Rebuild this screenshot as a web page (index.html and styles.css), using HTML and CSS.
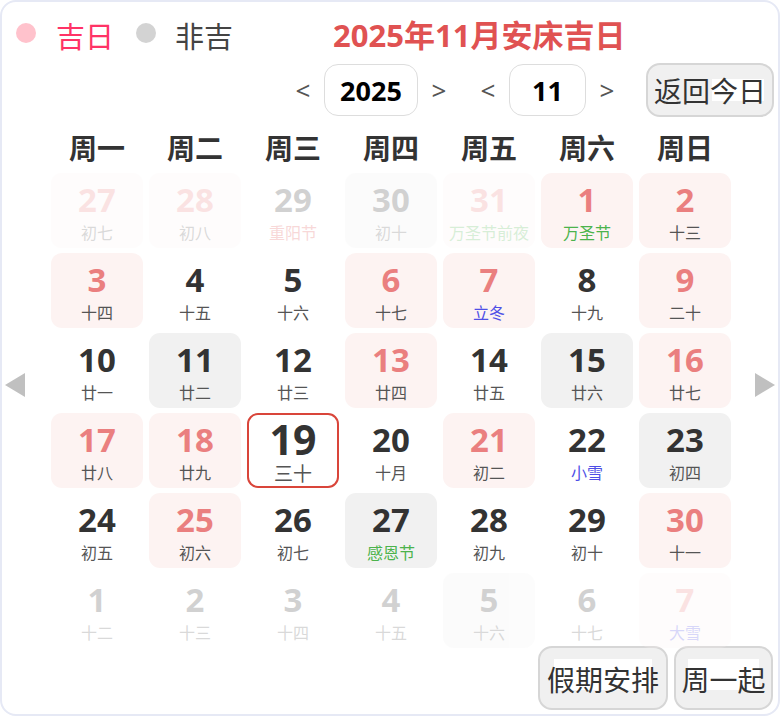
FILE: index.html
```html
<!DOCTYPE html>
<html lang="zh-CN">
<head>
<meta charset="utf-8">
<title>2025年11月安床吉日</title>
<link rel="stylesheet" href="styles.css">
</head>
<body>
<div class="app">
  <div class="top">
    <span class="dot dot-good"></span><span class="legend legend-good">吉日</span>
    <span class="dot dot-bad"></span><span class="legend legend-bad">非吉</span>
    <h1 class="title">2025年11月安床吉日</h1>
  </div>
  <div class="nav">
    <span class="arrow">&lt;</span>
    <span class="box box-year">2025</span>
    <span class="arrow">&gt;</span>
    <span class="arrow arrow-gap">&lt;</span>
    <span class="box box-month">11</span>
    <span class="arrow">&gt;</span>
    <button class="btn btn-today"><span class="hl-today">返回今日</span></button>
  </div>
  <div class="weekdays">
    <span>周一</span><span>周二</span><span>周三</span><span>周四</span><span>周五</span><span>周六</span><span>周日</span>
  </div>
  <div class="main">
    <div class="side side-left"><span class="tri tri-left"></span></div>
    <div class="grid">
      <div class="cell good faded"><span class="d">27</span><span class="l">初七</span></div>
      <div class="cell good faded"><span class="d">28</span><span class="l">初八</span></div>
      <div class="cell faded"><span class="d">29</span><span class="l fest-red">重阳节</span></div>
      <div class="cell bad faded"><span class="d">30</span><span class="l">初十</span></div>
      <div class="cell good faded"><span class="d">31</span><span class="l fest-green">万圣节前夜</span></div>
      <div class="cell good"><span class="d">1</span><span class="l fest-green">万圣节</span></div>
      <div class="cell good"><span class="d">2</span><span class="l">十三</span></div>

      <div class="cell good"><span class="d">3</span><span class="l">十四</span></div>
      <div class="cell"><span class="d">4</span><span class="l">十五</span></div>
      <div class="cell"><span class="d">5</span><span class="l">十六</span></div>
      <div class="cell good"><span class="d">6</span><span class="l">十七</span></div>
      <div class="cell good"><span class="d">7</span><span class="l term">立冬</span></div>
      <div class="cell"><span class="d">8</span><span class="l">十九</span></div>
      <div class="cell good"><span class="d">9</span><span class="l">二十</span></div>

      <div class="cell"><span class="d">10</span><span class="l">廿一</span></div>
      <div class="cell bad"><span class="d">11</span><span class="l">廿二</span></div>
      <div class="cell"><span class="d">12</span><span class="l">廿三</span></div>
      <div class="cell good"><span class="d">13</span><span class="l">廿四</span></div>
      <div class="cell"><span class="d">14</span><span class="l">廿五</span></div>
      <div class="cell bad"><span class="d">15</span><span class="l">廿六</span></div>
      <div class="cell good"><span class="d">16</span><span class="l">廿七</span></div>

      <div class="cell good"><span class="d">17</span><span class="l">廿八</span></div>
      <div class="cell good"><span class="d">18</span><span class="l">廿九</span></div>
      <div class="cell today"><span class="d">19</span><span class="l">三十</span></div>
      <div class="cell"><span class="d">20</span><span class="l">十月</span></div>
      <div class="cell good"><span class="d">21</span><span class="l">初二</span></div>
      <div class="cell"><span class="d">22</span><span class="l term">小雪</span></div>
      <div class="cell bad"><span class="d">23</span><span class="l">初四</span></div>

      <div class="cell"><span class="d">24</span><span class="l">初五</span></div>
      <div class="cell good"><span class="d">25</span><span class="l">初六</span></div>
      <div class="cell"><span class="d">26</span><span class="l">初七</span></div>
      <div class="cell bad"><span class="d">27</span><span class="l fest-green">感恩节</span></div>
      <div class="cell"><span class="d">28</span><span class="l">初九</span></div>
      <div class="cell"><span class="d">29</span><span class="l">初十</span></div>
      <div class="cell good"><span class="d">30</span><span class="l">十一</span></div>

      <div class="cell faded"><span class="d">1</span><span class="l">十二</span></div>
      <div class="cell faded"><span class="d">2</span><span class="l">十三</span></div>
      <div class="cell faded"><span class="d">3</span><span class="l">十四</span></div>
      <div class="cell faded"><span class="d">4</span><span class="l">十五</span></div>
      <div class="cell bad faded"><span class="d">5</span><span class="l">十六</span></div>
      <div class="cell faded"><span class="d">6</span><span class="l">十七</span></div>
      <div class="cell good faded"><span class="d">7</span><span class="l term">大雪</span></div>
    </div>
    <div class="side side-right"><span class="tri tri-right"></span></div>
  </div>
  <div class="bottom">
    <button class="btn btn-holiday"><span class="hl">假期安排</span></button>
    <button class="btn btn-week"><span class="hl">周一起</span></button>
  </div>
</div>
</body>
</html>
```

FILE: styles.css
```css
* { box-sizing: border-box; }
html, body { margin: 0; padding: 0; background: #fff; }
body {
  font-family: "Noto Sans", "Noto Sans CJK SC", sans-serif;
  color: #333;
}
.app {
  width: 780px;
  height: 716px;
  border: 2px solid #e6e9f5;
  border-radius: 16px;
  background: #fff;
  padding-top: 13px;
  overflow: hidden;
}
.top {
  display: flex;
  align-items: center;
  height: 40px;
  padding-left: 14px;
}
.dot {
  width: 20px;
  height: 20px;
  border-radius: 50%;
  flex: none;
  margin-top: -4px;
}
.dot-good { background: #ffc2cc; }
.dot-bad { background: #d3d3d3; margin-left: 22px; }
.legend {
  font-family: "Noto Sans CJK SC", sans-serif;
  font-size: 29px;
  line-height: 40px;
  margin-left: 20px;
}
.legend-good { color: #ff3366; }
.legend-bad { color: #444; margin-left: 19px; }
.title {
  margin: 0 0 0 100px;
  font-family: "Noto Sans", "Noto Sans CJK SC", sans-serif;
  font-size: 31px;
  font-weight: 700;
  line-height: 40px;
  color: #e05252;
}
.nav {
  display: flex;
  align-items: center;
  justify-content: flex-end;
  padding-right: 4px;
  margin-top: 8px;
  height: 54px;
}
.arrow {
  width: 28px;
  text-align: center;
  font-size: 26px;
  line-height: 30px;
  color: #555;
  margin-left: 7px;
}
.arrow-gap { margin-left: 21px; }
.box {
  height: 52px;
  border: 1.5px solid #dddddd;
  border-radius: 14px;
  display: flex;
  align-items: center;
  justify-content: center;
  font-size: 27px;
  font-weight: 700;
  color: #000;
  margin-left: 7px;
}
.box-year { width: 94px; }
.box-month { width: 77px; }
.btn {
  font-family: "Noto Sans CJK SC", sans-serif;
  font-size: 28px;
  color: #333;
  background: #f0f0f0;
  border: 2px solid #d6d6d6;
  border-radius: 14px;
  padding: 0;
  display: flex;
  align-items: center;
  justify-content: center;
}
.btn-today {
  width: 128px;
  height: 54px;
  margin-left: 25px;
}
.hl-today {
  line-height: 36px;
  background: linear-gradient(#fff, #fff) no-repeat right 2px center / 52px 22px;
}
.weekdays {
  display: grid;
  grid-template-columns: repeat(7, 92px);
  column-gap: 6px;
  margin-left: 49px;
  height: 56px;
  align-items: center;
}
.weekdays span {
  text-align: center;
  font-family: "Noto Sans CJK SC", sans-serif;
  font-weight: 700;
  font-size: 28px;
  line-height: 36px;
  color: #333;
  padding-top: 3px;
}
.main {
  display: flex;
}
.side {
  width: 49px;
  flex: none;
  padding-top: 200px;
}
.side-right { width: 47px; padding-left: 24px; }
.tri {
  display: block;
  width: 0;
  height: 0;
  border-top: 12px solid transparent;
  border-bottom: 12px solid transparent;
}
.tri-left { border-right: 20px solid #c0c0c0; margin-left: 3px; }
.tri-right { border-left: 20px solid #c0c0c0; }
.grid {
  display: grid;
  grid-template-columns: repeat(7, 92px);
  grid-auto-rows: 75px;
  column-gap: 6px;
  row-gap: 5px;
}
.cell {
  border-radius: 11px;
  display: flex;
  flex-direction: column;
  align-items: center;
  padding-top: 10px;
}
.cell .d {
  font-family: "Noto Sans", sans-serif;
  font-weight: 700;
  font-size: 33px;
  line-height: 34px;
  color: #333;
}
.cell .l {
  font-family: "Noto Sans CJK SC", sans-serif;
  font-size: 16px;
  line-height: 20px;
  margin-top: 5px;
  color: #555;
  white-space: nowrap;
}
.cell.good { background: #fdf3f2; }
.cell.good .d { color: #ea7f7f; }
.cell.bad { background: #f1f1f1; }
.cell.faded { opacity: 0.22; }
.cell .l.fest-green { color: #4cb34c; }
.cell .l.fest-red { color: #e05050; }
.cell .l.term { color: #4f4fe6; }
.cell.today {
  border: 2px solid #d9453a;
  padding-top: 4px;
}
.cell.today .d { font-size: 41px; line-height: 40px; }
.cell.today .l { font-size: 19px; line-height: 22px; margin-top: 3px; }
.bottom {
  display: flex;
  justify-content: flex-end;
  gap: 6px;
  padding-right: 5px;
  margin-top: -2px;
}
.btn-holiday { width: 130px; height: 64px; }
.btn-week { width: 99px; height: 64px; }
.hl {
  line-height: 36px;
  padding-top: 2px;
  background: linear-gradient(#fff, #fff) no-repeat center 0 / calc(100% - 14px) 31px;
}
```
